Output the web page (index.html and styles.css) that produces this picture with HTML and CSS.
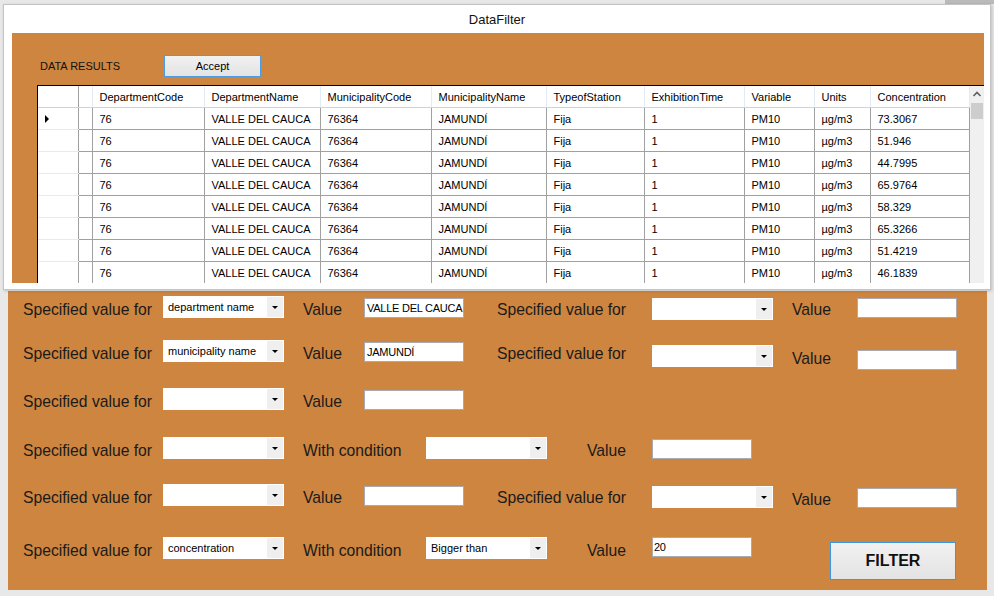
FILE: index.html
```html
<!DOCTYPE html>
<html>
<head>
<meta charset="utf-8">
<title>DataFilter</title>
<link rel="stylesheet" href="styles.css">
</head>
<body>
<div class="topstrip"><div class="topthumb"></div></div>

<div class="dialog">
  <div class="dialog-title">DataFilter</div>
  <div class="results-panel">
    <div class="results-head">
      <span class="results-label">DATA RESULTS</span>
      <button class="btn accept">Accept</button>
    </div>
    <div class="grid">
      <table class="grid-table">
        <colgroup>
          <col class="c-rh"><col class="c-blank"><col class="c-dc"><col class="c-dn"><col class="c-mc"><col class="c-mn"><col class="c-ts"><col class="c-et"><col class="c-var"><col class="c-un"><col class="c-co">
        </colgroup>
        <thead>
          <tr>
            <th class="rh"></th><th></th><th>DepartmentCode</th><th>DepartmentName</th><th>MunicipalityCode</th><th>MunicipalityName</th><th>TypeofStation</th><th>ExhibitionTime</th><th>Variable</th><th>Units</th><th>Concentration</th>
          </tr>
        </thead>
        <tbody>
          <tr><td class="rh"><i class="cur"></i></td><td></td><td>76</td><td>VALLE DEL CAUCA</td><td>76364</td><td>JAMUNDÍ</td><td>Fija</td><td>1</td><td>PM10</td><td>µg/m3</td><td>73.3067</td></tr>
          <tr><td class="rh"></td><td></td><td>76</td><td>VALLE DEL CAUCA</td><td>76364</td><td>JAMUNDÍ</td><td>Fija</td><td>1</td><td>PM10</td><td>µg/m3</td><td>51.946</td></tr>
          <tr><td class="rh"></td><td></td><td>76</td><td>VALLE DEL CAUCA</td><td>76364</td><td>JAMUNDÍ</td><td>Fija</td><td>1</td><td>PM10</td><td>µg/m3</td><td>44.7995</td></tr>
          <tr><td class="rh"></td><td></td><td>76</td><td>VALLE DEL CAUCA</td><td>76364</td><td>JAMUNDÍ</td><td>Fija</td><td>1</td><td>PM10</td><td>µg/m3</td><td>65.9764</td></tr>
          <tr><td class="rh"></td><td></td><td>76</td><td>VALLE DEL CAUCA</td><td>76364</td><td>JAMUNDÍ</td><td>Fija</td><td>1</td><td>PM10</td><td>µg/m3</td><td>58.329</td></tr>
          <tr><td class="rh"></td><td></td><td>76</td><td>VALLE DEL CAUCA</td><td>76364</td><td>JAMUNDÍ</td><td>Fija</td><td>1</td><td>PM10</td><td>µg/m3</td><td>65.3266</td></tr>
          <tr><td class="rh"></td><td></td><td>76</td><td>VALLE DEL CAUCA</td><td>76364</td><td>JAMUNDÍ</td><td>Fija</td><td>1</td><td>PM10</td><td>µg/m3</td><td>51.4219</td></tr>
          <tr><td class="rh"></td><td></td><td>76</td><td>VALLE DEL CAUCA</td><td>76364</td><td>JAMUNDÍ</td><td>Fija</td><td>1</td><td>PM10</td><td>µg/m3</td><td>46.1839</td></tr>
        </tbody>
      </table>
      <div class="vscroll">
        <svg class="vscroll-up" width="14" height="14" viewBox="0 0 14 14"><polyline points="3.5,9 7,5.5 10.5,9" fill="none" stroke="#606060" stroke-width="1.6"/></svg>
        <div class="vscroll-thumb"></div>
      </div>
    </div>
  </div>
</div>

<div class="form-panel">
  <div class="row h44">
    <span class="lbl w-spec">Specified value for</span>
    <div class="combo"><span class="combo-text">department name</span><span class="combo-btn"><i class="caret"></i></span></div>
    <span class="lbl w-value">Value</span>
    <div class="textbox gap-r">VALLE DEL CAUCA</div>
    <span class="lbl w-spec2">Specified value for</span>
    <div class="combo dy2"><span class="combo-text"></span><span class="combo-btn"><i class="caret"></i></span></div>
    <span class="lbl w-value2">Value</span>
    <div class="textbox"></div>
  </div>

  <div class="row h48">
    <span class="lbl w-spec">Specified value for</span>
    <div class="combo"><span class="combo-text">municipality name</span><span class="combo-btn"><i class="caret"></i></span></div>
    <span class="lbl w-value">Value</span>
    <div class="textbox gap-r">JAMUNDÍ</div>
    <span class="lbl w-spec2">Specified value for</span>
    <div class="combo dy5"><span class="combo-text"></span><span class="combo-btn"><i class="caret"></i></span></div>
    <span class="lbl w-value2 dy8">Value</span>
    <div class="textbox dy10"></div>
  </div>

  <div class="row h49">
    <span class="lbl w-spec">Specified value for</span>
    <div class="combo"><span class="combo-text"></span><span class="combo-btn"><i class="caret"></i></span></div>
    <span class="lbl w-value">Value</span>
    <div class="textbox"></div>
  </div>

  <div class="row h47">
    <span class="lbl w-spec">Specified value for</span>
    <div class="combo"><span class="combo-text"></span><span class="combo-btn"><i class="caret"></i></span></div>
    <span class="lbl w-cond">With condition</span>
    <div class="combo wide-r"><span class="combo-text"></span><span class="combo-btn"><i class="caret"></i></span></div>
    <span class="lbl w-value3">Value</span>
    <div class="textbox"></div>
  </div>

  <div class="row h53">
    <span class="lbl w-spec">Specified value for</span>
    <div class="combo"><span class="combo-text"></span><span class="combo-btn"><i class="caret"></i></span></div>
    <span class="lbl w-value">Value</span>
    <div class="textbox gap-r"></div>
    <span class="lbl w-spec2">Specified value for</span>
    <div class="combo dy2"><span class="combo-text"></span><span class="combo-btn"><i class="caret"></i></span></div>
    <span class="lbl w-value2 dy5">Value</span>
    <div class="textbox dy4"></div>
  </div>

  <div class="row">
    <span class="lbl w-spec">Specified value for</span>
    <div class="combo"><span class="combo-text">concentration</span><span class="combo-btn"><i class="caret"></i></span></div>
    <span class="lbl w-cond">With condition</span>
    <div class="combo wide-r"><span class="combo-text">Bigger than</span><span class="combo-btn"><i class="caret"></i></span></div>
    <span class="lbl w-value3">Value</span>
    <div class="textbox dy0 tb-num">20</div>
    <button class="btn filter">FILTER</button>
  </div>
</div>
</body>
</html>
```

FILE: styles.css
```css
* { box-sizing: border-box; }

html, body {
  margin: 0;
  padding: 0;
}

body {
  width: 994px;
  height: 596px;
  overflow: hidden;
  background: #e8e8e8;
  font-family: "Liberation Sans", Arial, sans-serif;
  color: #000;
}

/* top strip of the window behind */
.topstrip {
  height: 4px;
  display: flex;
  justify-content: flex-end;
}
.topthumb {
  width: 49px;
  background: #bababa;
}

/* dialog window */
.dialog {
  margin-left: 3px;
  width: 988px;
  height: 286px;
  background: #fff;
  border: 1px solid #c4c4c4;
  box-shadow: 1px 1px 3px rgba(0, 0, 0, 0.18);
  position: relative;
  z-index: 1;
}
.dialog-title {
  height: 28px;
  padding-top: 1px;
  line-height: 27px;
  text-align: center;
  font-size: 13px;
  color: #111;
}
.results-panel {
  margin: 0 6px 0 8px;
  height: 250px;
  background: #cd853f;
  display: flex;
  flex-direction: column;
}
.results-head {
  display: flex;
  align-items: center;
  height: 22px;
  margin-top: 22px;
  padding-left: 28px;
}
.results-label {
  width: 124px;
  font-size: 11px;
  color: #111;
}

.btn {
  font-family: "Liberation Sans", Arial, sans-serif;
  color: #000;
  border: 1px solid #4d9be3;
  background: linear-gradient(#f1f1f1, #e3e3e3);
  padding: 0;
  margin: 0;
}
.accept {
  width: 97px;
  height: 22px;
  font-size: 11px;
}

/* data grid */
.grid {
  margin-top: 8px;
  margin-left: 25px;
  height: 198px;
  display: flex;
  border-top: 1px solid #000;
  border-left: 1px solid #000;
  background: #fff;
  overflow: hidden;
}
.grid-table {
  width: 931px;
  table-layout: fixed;
  border-collapse: collapse;
  font-size: 11px;
}
.c-rh { width: 40px; }
.c-blank { width: 14px; }
.c-dc { width: 112px; }
.c-dn { width: 116px; }
.c-mc { width: 111px; }
.c-mn { width: 115px; }
.c-ts { width: 98px; }
.c-et { width: 100px; }
.c-var { width: 70px; }
.c-un { width: 56px; }
.c-co { width: 99px; }

.grid-table th {
  height: 21px;
  font-weight: normal;
  text-align: left;
  padding: 1px 0 0 7px;
  background: #fff;
  border-right: 1px solid #e2eaf5;
  border-bottom: 1px solid #c8d3e3;
  white-space: nowrap;
  overflow: hidden;
}
.grid-table td {
  height: 22px;
  padding: 1px 0 0 7px;
  border-right: 1px solid #a0a0a0;
  border-bottom: 1px solid #a0a0a0;
  white-space: nowrap;
  overflow: hidden;
}
.grid-table td.rh,
.grid-table th.rh {
  border-right: 1px solid #a0a0a0;
  border-bottom: 1px solid #e2eaf5;
  padding-left: 7px;
}
.grid-table th.rh {
  border-bottom: 1px solid #c8d3e3;
}
.cur {
  display: block;
  width: 0;
  height: 0;
  border-left: 4px solid #000;
  border-top: 4px solid transparent;
  border-bottom: 4px solid transparent;
}

.vscroll {
  width: 14px;
  flex: none;
  background: #f0f0f0;
  display: flex;
  flex-direction: column;
  align-items: center;
}
.vscroll-up {
  display: block;
  margin-top: 1px;
}
.vscroll-thumb {
  margin-top: 2px;
  width: 12px;
  height: 16px;
  background: #cdcdcd;
}

/* main filter form */
.form-panel {
  margin: 1px 0 0 8px;
  width: 979px;
  height: 299px;
  background: #cd853f;
  padding: 5px 0 0 15px;
}
.row {
  display: flex;
  align-items: flex-start;
}
.h44 { height: 44px; }
.h48 { height: 48px; }
.h49 { height: 49px; }
.h47 { height: 47px; }
.h53 { height: 53px; }

.lbl {
  flex: none;
  font-size: 15.7px;
  line-height: 22px;
  margin-top: 3px;
  color: #1a1a1a;
  white-space: nowrap;
}
.w-spec { width: 140px; }
.w-value { width: 61px; }
.w-cond { width: 123px; }
.w-spec2 { width: 155px; }
.w-value2 { width: 65px; }
.w-value3 { width: 65px; }

.combo {
  flex: none;
  width: 121px;
  height: 22px;
  margin-right: 19px;
  background: #fff;
  display: flex;
}
.combo.wide-r { margin-right: 40px; }
.combo-text {
  flex: 1;
  padding-left: 5px;
  font-size: 11px;
  line-height: 22px;
  white-space: nowrap;
  overflow: hidden;
}
.combo-btn {
  width: 16px;
  margin: 1px 1px 1px 0;
  background: #efefef;
  display: flex;
  align-items: center;
  justify-content: center;
}
.caret {
  display: block;
  width: 0;
  height: 0;
  border-top: 3px solid #000;
  border-left: 3px solid transparent;
  border-right: 3px solid transparent;
}

.textbox {
  flex: none;
  width: 100px;
  height: 20px;
  margin-top: 2px;
  border: 1px solid #a9abb0;
  background: #fff;
  font-size: 11px;
  letter-spacing: -0.25px;
  line-height: 18px;
  padding-left: 2px;
  white-space: nowrap;
  overflow: hidden;
}
.textbox.gap-r { margin-right: 33px; }
.tb-num { padding-left: 1px; }

.dy0 { margin-top: 0; }
.dy2 { margin-top: 2px; }
.dy4 { margin-top: 4px; }
.dy5 { margin-top: 5px; }
.dy8 { margin-top: 8px; }
.dy10 { margin-top: 10px; }

.filter {
  flex: none;
  width: 126px;
  height: 38px;
  margin-left: 78px;
  margin-top: 5px;
  font-size: 16px;
  font-weight: bold;
  color: #111;
  border-color: #3f95e6;
}
```
